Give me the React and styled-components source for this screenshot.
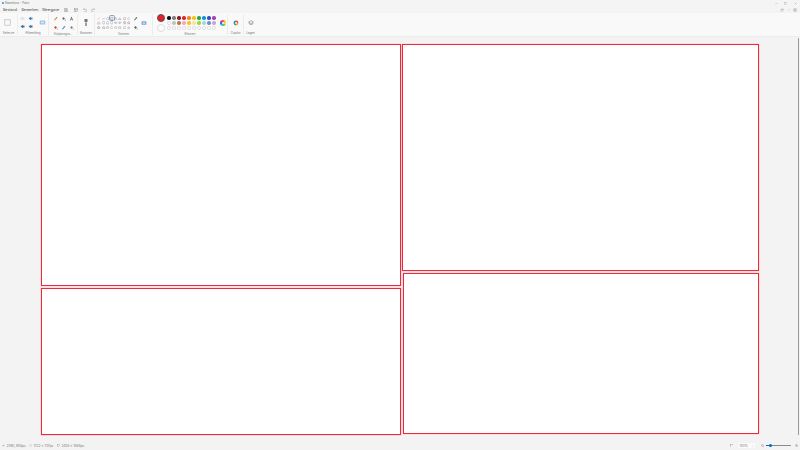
import React from "react";
import styled, { createGlobalStyle } from "styled-components";

const Global = createGlobalStyle`
  html, body { margin: 0; padding: 0; height: 100%; }
  body { background: #f3f3f3; font-family: "Inter", "Liberation Sans", sans-serif; overflow: hidden; }
  #root { width: 800px; height: 450px; }
`;

const Window = styled.div`
  width: 800px;
  height: 450px;
  display: flex;
  flex-direction: column;
  color: #444;
`;

const TitleBar = styled.div`
  height: 6px;
  flex: none;
  display: flex;
  align-items: center;
  padding-left: 2px;
  background: #f4f4f4;
  font-size: 3px;
  color: #777;
`;

const AppDot = styled.span`
  width: 2px;
  height: 2px;
  border-radius: 50%;
  background: #3f8fd8;
  margin-right: 1px;
`;

const WindowControls = styled.div`
  margin-left: auto;
  display: flex;
  align-items: center;
  gap: 6.5px;
  padding-right: 3.5px;
  color: #888;
`;

const MenuBar = styled.div`
  height: 7px;
  flex: none;
  display: flex;
  align-items: center;
  padding: 0 3px;
  background: #f4f4f4;
`;

const MenuItem = styled.span`
  font-size: 3.6px;
  color: #444;
  width: ${(p) => p.$w}px;
`;

const QuickIcon = styled.span`
  width: ${(p) => p.$w || 9}px;
  display: flex;
  color: #777;
`;

const RightTools = styled.div`
  margin-left: auto;
  display: flex;
  align-items: center;
  gap: 3.5px;
  padding-right: 0;
  color: #888;
`;

const Ribbon = styled.div`
  height: 24px;
  flex: none;
  display: flex;
  background: #f9f9f9;
  border-bottom: 1px solid #ececec;
  box-sizing: border-box;
`;

const Group = styled.div`
  width: ${(p) => p.$w}px;
  flex: none;
  display: flex;
  flex-direction: column;
  align-items: center;
  box-sizing: border-box;
  border-right: ${(p) => (p.$last ? "none" : "1px solid #ececec")};
  margin: 1px 0;
`;

const GroupBody = styled.div`
  flex: 1;
  align-self: stretch;
  display: flex;
  align-items: center;
  justify-content: ${(p) => (p.$pl !== undefined ? "flex-start" : "center")};
  padding-left: ${(p) => p.$pl || 0}px;
  padding-right: ${(p) => p.$pr || 0}px;
  gap: ${(p) => p.$gap || 0}px;
`;

const GroupLabel = styled.span`
  font-size: 3px;
  line-height: 4px;
  color: #777;
  white-space: nowrap;
`;

const ToolGrid = styled.div`
  display: grid;
  grid-template-columns: repeat(${(p) => p.$cols}, ${(p) => p.$cell}px);
  grid-auto-rows: ${(p) => p.$row}px;
  place-items: center;
  color: #666;
`;

const ShapeCell = styled.span`
  display: flex;
  padding: 0.3px;
  color: #5c5c5c;
  border-radius: 0.5px;
  outline: ${(p) => (p.$on ? "0.5px solid #8fa0b5" : "none")};
  background: ${(p) => (p.$on ? "#e4ecf5" : "transparent")};
`;

const ActiveColor = styled.span`
  width: 6px;
  height: 6px;
  border-radius: 50%;
  background: ${(p) => p.$c};
  border: 0.5px solid ${(p) => (p.$on ? "#555" : "#ddd")};
  box-sizing: content-box;
`;

const ColorPair = styled.div`
  display: flex;
  flex-direction: column;
  gap: 2px;
`;

const Swatch = styled.span`
  width: 3.4px;
  height: 3.4px;
  border-radius: 50%;
  background: ${(p) => p.$c || "#fbfbfb"};
  border: ${(p) => (p.$c ? "none" : "0.4px solid #dcdcdc")};
  box-sizing: border-box;
`;

const Rainbow = styled.span`
  width: 6px;
  height: 6px;
  margin-left: 1.5px;
  border-radius: 50%;
  background: conic-gradient(#f44, #fb3, #ee3, #4c4, #3cd, #36e, #a3d, #f44);
  display: flex;
  align-items: center;
  justify-content: center;
  &::after {
    content: "";
    width: 2.6px;
    height: 2.6px;
    border-radius: 50%;
    background: #f9f9f9;
  }
`;

const Workspace = styled.div`
  flex: 1;
  display: flex;
  background: #f3f3f3;
  min-height: 0;
`;

const CanvasArea = styled.div`
  flex: 1;
  padding: 6px 0 0 40px;
`;

const Canvas = styled.div`
  position: relative;
  width: 720px;
  height: 392px;
  background: #fff;
`;

const Frame = styled.div`
  position: absolute;
  left: ${(p) => p.$x}px;
  top: ${(p) => p.$y}px;
  width: ${(p) => p.$w}px;
  height: ${(p) => p.$h}px;
  box-sizing: border-box;
  border: 1px solid #ec2a3c;
  box-shadow: 0 0 0 0.5px #f8bcc3;
`;

const ScrollTrack = styled.div`
  width: 3px;
  flex: none;
  display: flex;
  justify-content: center;
  padding-top: 1px;
`;

const ScrollThumb = styled.div`
  width: 1px;
  height: 397px;
  background: #9a9a9a;
  border-radius: 1px;
`;

const StatusBar = styled.div`
  height: 9px;
  flex: none;
  display: flex;
  align-items: center;
  padding: 0 2px;
  background: #f3f3f3;
  font-size: 3.2px;
  color: #777;
`;

const StatusItem = styled.span`
  width: ${(p) => p.$w}px;
  flex: none;
  display: flex;
  align-items: center;
  gap: 1.5px;
`;

const ZoomBox = styled.div`
  margin-left: auto;
  display: flex;
  align-items: center;
  gap: 2.5px;
`;

const ZoomSelect = styled.span`
  width: 17px;
  height: 5px;
  display: flex;
  align-items: center;
  justify-content: space-between;
  padding: 0 1.5px;
  box-sizing: border-box;
  background: #fafafa;
  border-radius: 1px;
  margin: 0 3px 0 2.5px;
`;

const Slider = styled.div`
  position: relative;
  width: 25px;
  height: 1px;
  margin: 0 1.5px 0 -1px;
  background: #8a8a8a;
  border-radius: 1px;
`;

const SliderFill = styled.div`
  height: 100%;
  background: #0067c0;
`;

const SliderThumb = styled.span`
  position: absolute;
  left: 3.5px;
  top: -1px;
  width: 3px;
  height: 3px;
  border-radius: 50%;
  background: #0067c0;
`;

const Ico = ({ s = 4, children, sw = 0.9 }) => (
  <svg width={s} height={s} viewBox="0 0 10 10" fill="none" stroke="currentColor" strokeWidth={sw}>
    {children}
  </svg>
);

const Colored = ({ s = 5, a = "#666", b = "#2f7fd0", kind = 0 }) => (
  <svg width={s} height={s} viewBox="0 0 10 10">
    {kind === 0 && <><path d="M2 8 7 2l1.5 1.5L3.5 9z" fill={a} /><path d="M7 2l1.5 1.5L7.6 4.4 6.2 3z" fill={b} /></>}
    {kind === 1 && <><path d="M2 5l3-3 3 3-3 3z" fill={a} /><circle cx="8.5" cy="8" r="1.2" fill={b} /></>}
    {kind === 2 && <path d="M5 1 8.5 9H7L6.2 7H3.8L3 9H1.5zM4.3 5.6h1.4L5 3.8z" fill={a} />}
    {kind === 3 && <><rect x="1" y="2" width="8" height="6" rx="1" fill={b} /><rect x="3" y="4" width="4" height="2" fill="#e3eefa" /></>}
    {kind === 4 && <><path d="M1 5l5-3.5V8.5z" fill={b} /><path d="M6 3h3v4H6z" fill={a} /></>}
  </svg>
);

const shapes = [
  "M1 9 9 1", "M1 8C3 1 6 9 9 2", "M5 1a4 4 0 1 0 .1 0z", "M1 2h8v6H1z", "M5 1 9 9H1z", "M1 9 5 2l4 7zM1 9h8", "M2 2h6v6H2z", "M5 1 9 5 5 9 1 5z",
  "M1 9 5 2l4 7z", "M3 1h4l2 4-2 4H3L1 5z", "M5 1 9 4 7.5 9h-5L1 4z", "M3 1h4l2 4-2 4H3L1 5z", "M1 4h5V2l3 3-3 3V6H1z", "M9 4H4V2L1 5l3 3V6h5z", "M4 1h2v3h3v2H6v3H4V6H1V4h3z", "M5 1l1.2 3H9L6.8 6 8 9 5 7.3 2 9l1.2-3L1 4h2.8z",
  "M4 1h2v3h3v2H6v3H4V6H1V4h3z", "M5 1l1.2 3H9L6.8 6 8 9 5 7.3 2 9l1.2-3L1 4h2.8z", "M2 2h6v4H4L2 8z", "M5 1 9 5 5 9 1 5z", "M5 2a3 3 0 1 0 .1 0z", "M2 2h6v6H2z", "M3 2h4a2 2 0 0 1 0 6H3a2 2 0 0 1 0-6z", "M2 3h6l-1 5H3z",
];

const row1 = ["#111111", "#7f7f7f", "#8a1c24", "#e0262e", "#f58220", "#f2c21b", "#22a84a", "#1296d6", "#3a48cc", "#a345a8"];
const row2 = [null, "#c3c3c3", "#b97a57", "#f5a6c4", "#f5c518", "#efe4a0", "#a5d82a", "#9ad9ea", "#7092be", "#c0a8dc"];
const row3 = Array(10).fill(null);

export default function App() {
  return (
    <Window>
      <Global />
      <TitleBar>
        <AppDot />
        Naamloos - Paint
        <WindowControls>
          <Ico s={3}><path d="M1 5h8" /></Ico>
          <Ico s={3}><rect x="2" y="2" width="6" height="6" /></Ico>
          <Ico s={3}><path d="M2 2l6 6M8 2 2 8" /></Ico>
        </WindowControls>
      </TitleBar>
      <MenuBar>
        <MenuItem $w={18.5}>Bestand</MenuItem>
        <MenuItem $w={20.5}>Bewerken</MenuItem>
        <MenuItem $w={22}>Weergave</MenuItem>
        <QuickIcon $w={10}><Ico><path d="M1 1h6.5L9 2.5V9H1zM3 1v3h4V1M3 9V6h4v3" /></Ico></QuickIcon>
        <QuickIcon $w={9}><Ico><rect x="1" y="1" width="8" height="8" /><path d="M1 4h8M4 4v5" /></Ico></QuickIcon>
        <QuickIcon $w={8}><Ico><path d="M3 1 1 3l2 2M1 3h5a3 3 0 0 1 0 6H3" /></Ico></QuickIcon>
        <QuickIcon $w={8}><Ico><path d="M7 1l2 2-2 2M9 3H4a3 3 0 0 0 0 6h3" /></Ico></QuickIcon>
        <RightTools>
          <Ico><path d="M2 8V5a3 3 0 0 1 6 0M8 2v3H5M8 8H3" /></Ico>
          <Ico s={2}><path d="M5 2v6M2 5h6" /></Ico>
          <Ico><circle cx="5" cy="5" r="2" /><circle cx="5" cy="5" r="4" /></Ico>
        </RightTools>
      </MenuBar>
      <Ribbon>
        <Group $w={18}>
          <GroupBody $pr={3}>
            <Ico s={7} sw={0.5}><rect x="1" y="1" width="8" height="8" strokeDasharray="1 0.5" /></Ico>
          </GroupBody>
          <GroupLabel>Selectie</GroupLabel>
        </Group>
        <Group $w={31}>
          <GroupBody $pl={0} $gap={5}>
            <ToolGrid $cols={2} $cell={8} $row={8}>
              <Colored a="#ddd" b="#e2e2e2" kind={3} />
              <Colored kind={4} a="#888" />
              <Colored kind={4} a="#2f7fd0" b="#666" />
              <Colored kind={4} a="#666" />
            </ToolGrid>
            <Colored s={7} kind={3} b="#9cc7ea" />
          </GroupBody>
          <GroupLabel>Afbeelding</GroupLabel>
        </Group>
        <Group $w={29}>
          <GroupBody>
            <ToolGrid $cols={3} $cell={8} $row={9}>
              <Colored kind={0} a="#d8862a" />
              <Colored kind={1} a="#777" b="#2f7fd0" />
              <Colored kind={2} a="#666" />
              <Colored kind={1} a="#d24a4a" b="#999" />
              <Colored kind={0} a="#3a7fd0" b="#888" />
              <Colored kind={1} a="#888" b="#aaa" />
            </ToolGrid>
          </GroupBody>
          <GroupLabel>Hulpprogra...</GroupLabel>
        </Group>
        <Group $w={17}>
          <GroupBody>
            <svg width="4" height="7" viewBox="0 0 4 7">
              <rect x="0.5" y="0" width="3" height="3" fill="#777" />
              <rect x="1" y="3" width="2" height="1" fill="#ccc" />
              <rect x="1.2" y="4" width="1.6" height="3" fill="#888" />
            </svg>
          </GroupBody>
          <GroupLabel>Kwasten</GroupLabel>
        </Group>
        <Group $w={58}>
          <GroupBody $pl={2}>
            <ToolGrid $cols={8} $cell={4.2} $row={4.8}>
              {shapes.map((d, i) => (
                <ShapeCell key={i} $on={i === 3}>
                  <Ico s={3.4} sw={0.8}><path d={d} /></Ico>
                </ShapeCell>
              ))}
            </ToolGrid>
            <ToolGrid $cols={1} $cell={10} $row={9}>
              <Colored kind={0} a="#666" b="#2f7fd0" />
              <Colored kind={1} a="#666" b="#999" />
            </ToolGrid>
            <Colored s={6} kind={3} b="#7ea6cc" />
          </GroupBody>
          <GroupLabel>Vormen</GroupLabel>
        </Group>
        <Group $w={75}>
          <GroupBody $pl={3.5} $gap={2}>
            <ColorPair>
              <ActiveColor $c="#ee1c25" $on />
              <ActiveColor $c="#fbfbfb" />
            </ColorPair>
            <ToolGrid $cols={10} $cell={5} $row={5}>
              {[...row1, ...row2, ...row3].map((c, i) => (
                <Swatch key={i} $c={c} />
              ))}
            </ToolGrid>
            <Rainbow />
          </GroupBody>
          <GroupLabel>Kleuren</GroupLabel>
        </Group>
        <Group $w={16}>
          <GroupBody>
            <svg width="6" height="6" viewBox="0 0 10 10">
              <path d="M5 1a4 4 0 0 1 4 4H5z" fill="#e2574c" />
              <path d="M9 5a4 4 0 0 1-4 4V5z" fill="#e9a23b" />
              <path d="M5 9a4 4 0 0 1-4-4h4z" fill="#2f9e6a" />
              <path d="M1 5a4 4 0 0 1 4-4v4z" fill="#2f7fd0" />
              <circle cx="5" cy="5" r="1.5" fill="#fff" />
            </svg>
          </GroupBody>
          <GroupLabel>Copilot</GroupLabel>
        </Group>
        <Group $w={13} $last>
          <GroupBody>
            <Ico s={6} sw={0.7}><path d="M5 1 9 3.5 5 6 1 3.5zM1 5.5 5 8l4-2.5" /></Ico>
          </GroupBody>
          <GroupLabel>Lagen</GroupLabel>
        </Group>
      </Ribbon>
      <Workspace>
        <CanvasArea>
          <Canvas>
            <Frame $x={1} $y={1} $w={360} $h={242} />
            <Frame $x={1} $y={245} $w={360} $h={147} />
            <Frame $x={362} $y={1} $w={357} $h={227} />
            <Frame $x={363} $y={230} $w={356} $h={161} />
          </Canvas>
        </CanvasArea>
        <ScrollTrack><ScrollThumb /></ScrollTrack>
      </Workspace>
      <StatusBar>
        <StatusItem $w={27}>
          <Ico s={3}><path d="M5 1v8M1 5h8" /></Ico>
          2590, 908px
        </StatusItem>
        <StatusItem $w={28}>
          <Ico s={3}><rect x="1" y="2" width="8" height="6" strokeDasharray="1.5 1" /></Ico>
          1722 × 707px
        </StatusItem>
        <StatusItem $w={30}>
          <Ico s={3}><rect x="1" y="2" width="8" height="6" /></Ico>
          3455 × 1864px
        </StatusItem>
        <ZoomBox>
          <Ico s={3.5}><rect x="1" y="1" width="8" height="8" /></Ico>
          <ZoomSelect>
            100%
            <Ico s={2}><path d="M1 3l4 4 4-4" /></Ico>
          </ZoomSelect>
          <Ico s={3.5}><circle cx="4" cy="4" r="3" /><path d="M6 6l3 3M2.5 4h3" /></Ico>
          <Slider>
            <SliderFill style={{ width: "20%" }} />
            <SliderThumb />
          </Slider>
          <Ico s={3.5}><circle cx="4" cy="4" r="3" /><path d="M6 6l3 3M2.5 4h3M4 2.5v3" /></Ico>
        </ZoomBox>
      </StatusBar>
    </Window>
  );
}
